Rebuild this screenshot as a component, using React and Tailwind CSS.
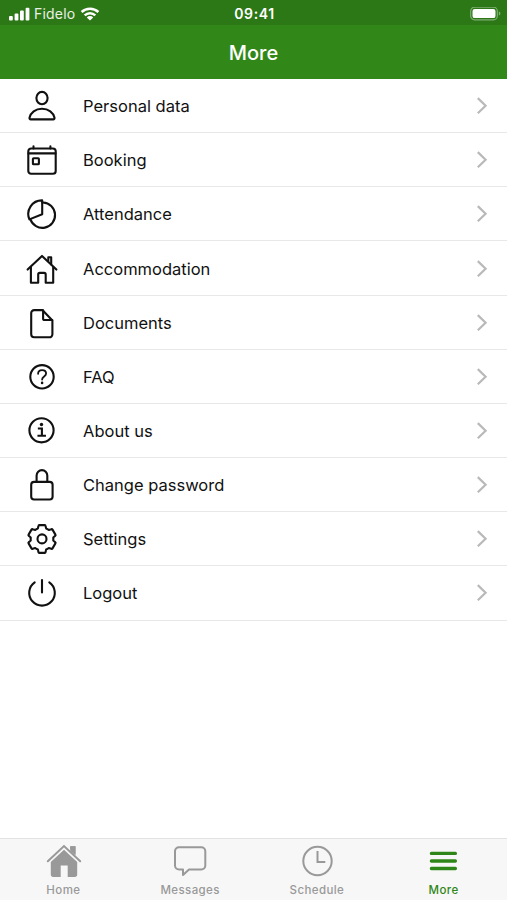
import React, { useState } from "react";

const Icon = ({ children }) => (
  <svg
    viewBox="0 0 32 32"
    className="w-8 h-8 shrink-0"
    fill="none"
    stroke="currentColor"
    strokeWidth="2.1"
    strokeLinecap="round"
    strokeLinejoin="round">
    {children}
  </svg>
);

const PersonIcon = () => (
  <Icon>
    <ellipse cx="16" cy="8.1" rx="5.6" ry="6.2" />
    <path d="M16 18.8c-6.6 0-11.4 3.7-12.5 9-.2 1 .3 1.6 1.2 1.6h22.6c.9 0 1.4-.6 1.2-1.6-1.1-5.3-5.9-9-12.5-9z" />
  </Icon>
);

const CalendarIcon = () => (
  <Icon>
    <rect x="2.3" y="4.5" width="27.4" height="25.3" rx="2.8" />
    <path d="M2.5 9.4h27M7.5 2.4v2M24.4 2.4v2" />
    <rect x="6.9" y="14.2" width="6" height="6" rx="0.8" />
  </Icon>
);

const PieIcon = () => (
  <Icon>
    <path d="M16.2 2.4A13.6 13.6 0 0 0 3.4 21.4L16.2 16.2z" />
    <path d="M16.2 4.5h.8a12.7 12.7 0 1 1-12.7 16.7" />
  </Icon>
);

const HouseIcon = () => (
  <Icon>
    <path d="M1.6 16.6 16 2.9l14.4 13.7" />
    <path d="M4.9 14v15.8h7.3v-8.4c0-.9.6-1.5 1.5-1.5h4.5c.9 0 1.5.6 1.5 1.5v8.4h7.5V14" />
    <path d="M22.3 8V4.3h2.9v7.2" />
  </Icon>
);

const DocumentIcon = () => (
  <Icon>
    <path d="M16.4 3.1H8.2a3 3 0 0 0-3 3v21.2a3 3 0 0 0 3 3h15.2a3 3 0 0 0 3-3V13.4z" />
    <path d="M17.1 3.4v8a1.6 1.6 0 0 0 1.6 1.6h7.5" />
  </Icon>
);

const HelpIcon = () => (
  <Icon>
    <circle cx="16" cy="15.8" r="11.7" />
    <path d="M12.1 12.8c0-2.2 1.7-3.6 4-3.6s4 1.4 4 3.4c0 3-4 2.9-4 6" strokeWidth="1.8" />
    <circle cx="16.1" cy="21.9" r="1.3" fill="currentColor" stroke="none" />
  </Icon>
);

const InfoIcon = () => (
  <Icon>
    <circle cx="15.5" cy="15.3" r="12.1" />
    <path d="M12.9 13.5h3v7.1M12.5 20.8h6.4" strokeLinecap="square" strokeLinejoin="miter" />
    <circle cx="15.5" cy="9.5" r="1.7" fill="currentColor" stroke="none" />
  </Icon>
);

const LockIcon = () => (
  <Icon>
    <rect x="5.2" y="12.9" width="21.4" height="17.6" rx="2.9" />
    <path d="M10.6 12.9V6.5a5.3 5.3 0 0 1 10.7 0v6.4" />
  </Icon>
);

const GearIcon = () => (
  <Icon>
    <circle cx="16" cy="15.9" r="4.5" />
    <path d="M13.2 2.1h5.6c.7 0 .7.3.8.9l.5 2.4c.9.3 1.9.9 2.7 1.6l2.5-.8c.5-.2.9-.1 1.2.4l2.9 5c.3.5.2.9-.2 1.2l-1.9 1.7v3l1.9 1.7c.4.3.5.7.2 1.2l-2.9 5c-.3.5-.7.6-1.2.4l-2.5-.8c-.8.7-1.8 1.3-2.7 1.6l-.5 2.4c-.1.6-.1.9-.8.9h-5.6c-.7 0-.7-.3-.8-.9l-.5-2.4c-.9-.3-1.9-.9-2.7-1.6l-2.5.8c-.5.2-.9.1-1.2-.4l-2.9-5c-.3-.5-.2-.9.2-1.2l1.9-1.7v-3l-1.9-1.7c-.4-.3-.5-.7-.2-1.2l2.9-5c.3-.5.7-.6 1.2-.4l2.5.8c.8-.7 1.8-1.3 2.7-1.6l.5-2.4c.1-.6.1-.9.8-.9z" />
  </Icon>
);

const PowerIcon = () => (
  <Icon>
    <path d="M8.7 5.3a12.8 12.8 0 1 0 14.6 0M16 3v12.4" />
  </Icon>
);

const HomeTabIcon = () => (
  <svg viewBox="0 0 36 36" className="w-9 h-9 ml-0.5" fill="currentColor">
    <path d="M18 6.8 4.8 19v12.6c0 1.6.8 2.4 2.4 2.4H14.7V22.4h7V34h7.1c1.6 0 2.4-.8 2.4-2.4V19z" />
    <path d="M24.2 3.3h5.3v9.4l-5.3-5z" />
    <path d="M1.8 18.2 18 3l16.2 15.2" fill="none" stroke="#f7f7f7" strokeWidth="4" />
    <path d="M24.2 3.3h5.3v9.4l-5.3-5z" />
    <path d="M1.8 18.2 18 3l16.2 15.2" fill="none" stroke="currentColor" strokeWidth="2" strokeLinecap="round" />
  </svg>
);

const MessageTabIcon = () => (
  <svg viewBox="0 0 36 36" className="w-9 h-9" fill="none" stroke="currentColor" strokeWidth="2" strokeLinejoin="round">
    <path d="M7 4.2h22.3a4 4 0 0 1 4 4v14.3a4 4 0 0 1-4 4H17L11 32v-5.5H7a4 4 0 0 1-4-4V8.2a4 4 0 0 1 4-4z" />
  </svg>
);

const ClockTabIcon = () => (
  <svg viewBox="0 0 36 36" className="w-9 h-9" fill="none" stroke="currentColor" strokeWidth="2">
    <circle cx="18.5" cy="18" r="14.2" />
    <path d="M18.5 8v11.1h7.8" />
  </svg>
);

const MenuTabIcon = () => (
  <svg viewBox="0 0 36 36" className="w-9 h-9" stroke="currentColor" strokeWidth="3.3" strokeLinecap="round">
    <path d="M5.4 10.4h24M5.4 18h24M5.4 25.5h24" />
  </svg>
);

const menuItems = [
  { label: "Personal data", icon: PersonIcon },
  { label: "Booking", icon: CalendarIcon },
  { label: "Attendance", icon: PieIcon },
  { label: "Accommodation", icon: HouseIcon },
  { label: "Documents", icon: DocumentIcon },
  { label: "FAQ", icon: HelpIcon },
  { label: "About us", icon: InfoIcon },
  { label: "Change password", icon: LockIcon },
  { label: "Settings", icon: GearIcon },
  { label: "Logout", icon: PowerIcon },
];

const tabs = [
  { label: "Home", icon: HomeTabIcon },
  { label: "Messages", icon: MessageTabIcon },
  { label: "Schedule", icon: ClockTabIcon },
  { label: "More", icon: MenuTabIcon },
];

const StatusBar = () => (
  <div className="grid grid-cols-3 items-center h-[25px] pt-0.5 pl-2 pr-1.5 bg-[#2c7716] text-white">
    <div className="flex items-center">
      <svg viewBox="0 0 23 14" className="w-[23px] h-3.5" fill="currentColor">
        <rect x="1" y="9" width="3.8" height="4.5" rx="1" />
        <rect x="6.6" y="6.5" width="3.8" height="7" rx="1" />
        <rect x="12" y="3.5" width="3.8" height="10" rx="1" />
        <rect x="17.6" y="0.7" width="3.8" height="12.8" rx="1" />
      </svg>
      <span className="ml-[3px] text-[14px] leading-4 tracking-[0.2px] text-white/90">Fidelo</span>
      <svg viewBox="0 0 20 14" className="w-5 h-3.5 ml-[5px]" fill="none" stroke="currentColor" strokeWidth="2.5">
        <path d="M1.6 5a12.2 12.2 0 0 1 16.8 0M4.7 8.3a7.6 7.6 0 0 1 10.6 0" />
        <path d="M10 13.6 6.8 10.4a4.6 4.6 0 0 1 6.4 0z" fill="currentColor" stroke="none" />
      </svg>
    </div>
    <div className="text-center text-[14px] leading-4 font-semibold tracking-[0.6px]">09:41</div>
    <div className="flex justify-end">
      <svg viewBox="0 0 31 14" className="w-[31px] h-3.5">
        <rect x="0.7" y="0.2" width="26.6" height="12.6" rx="3.8" fill="none" stroke="#fff" strokeOpacity="0.4" strokeWidth="1.2" />
        <rect x="2.5" y="1.9" width="23" height="9.2" rx="2.2" fill="#fff" />
        <path d="M28.8 4.5v4c1-.4 1.6-1.1 1.6-2s-.6-1.6-1.6-2z" fill="#fff" fillOpacity="0.4" />
      </svg>
    </div>
  </div>
);

const App = () => {
  const [activeTab, setActiveTab] = useState("More");

  return (
    <div className="h-screen flex flex-col bg-white overflow-hidden font-['Inter','Liberation_Sans',sans-serif]">
      <StatusBar />
      <header className="h-[54px] flex items-center justify-center pt-px bg-[#318818]">
        <h1 className="text-[20px] leading-6 font-medium text-white">More</h1>
      </header>

      <main className="flex-grow">
        <ul>
          {menuItems.map(({ label, icon: ItemIcon }) => (
            <li key={label}>
              <button className="w-full h-[54.17px] flex items-center pt-px pl-[26px] pr-[18px] border-b border-[#e8e8e8] text-left text-[#111]">
                <ItemIcon />
                <span className="flex-grow ml-[25px] text-[16.5px] leading-6">{label}</span>
                <svg viewBox="0 0 14 20" className="w-3.5 h-5" fill="none" stroke="#b9b9b9" strokeWidth="2.2">
                  <path d="m2.8 2.1 7.8 7.6-7.8 7.6" />
                </svg>
              </button>
            </li>
          ))}
        </ul>
      </main>

      <nav className="h-[62px] grid grid-cols-4 bg-[#f7f7f7] border-t border-[#e2e2e2]">
        {tabs.map(({ label, icon: TabIcon }) => (
          <button
            key={label}
            onClick={() => setActiveTab(label)}
            className={`flex flex-col items-center pt-1 ${
              activeTab === label ? "text-[#2f8618]" : "text-[#999]"
            }`}>
            <TabIcon />
            <span className="mt-[3px] text-[11.5px] leading-4 font-medium tracking-[0.4px]">{label}</span>
          </button>
        ))}
      </nav>
    </div>
  );
};

export default App;
